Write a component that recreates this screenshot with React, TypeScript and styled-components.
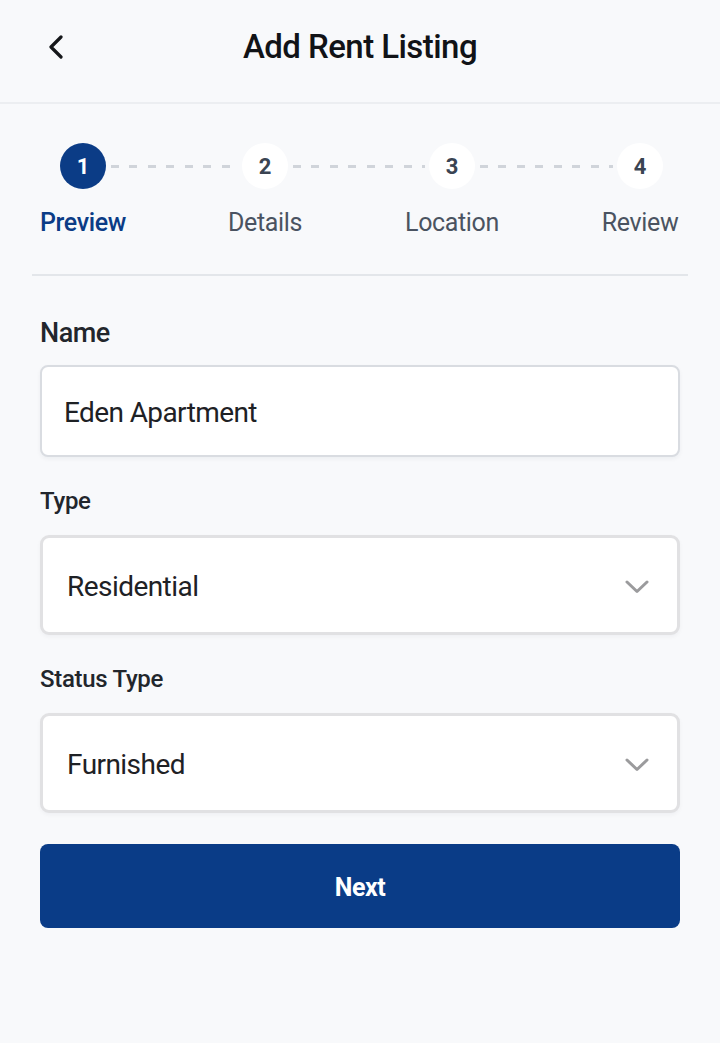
import React from "react";
import styled, { createGlobalStyle } from "styled-components";

const Global = createGlobalStyle`
  html, body { margin: 0; padding: 0; background: #f8f9fb; }
  body { font-family: Roboto, "Liberation Sans", Arial, sans-serif; }
  * { box-sizing: border-box; }
`;

const Page = styled.div`
  width: 720px;
  min-height: 1043px;
  background: #f8f9fb;
  display: flex;
  flex-direction: column;
`;

const Header = styled.header`
  height: 104px;
  border-bottom: 2px solid #eceef1;
  display: grid;
  grid-template-columns: 80px 1fr 80px;
  align-items: center;
  padding-bottom: 9px;
`;

const BackButton = styled.button`
  background: none;
  border: none;
  padding: 0;
  margin-left: 46px;
  width: 20px;
  height: 26px;
  display: flex;
  align-items: center;
  justify-content: center;
  cursor: pointer;
`;

const Title = styled.h1`
  margin: 0;
  text-align: center;
  font-size: 33px;
  font-weight: 500;
  color: #111317;
  letter-spacing: -0.55px;
`;

const Stepper = styled.div`
  display: flex;
  align-items: flex-start;
  padding: 39px 57px 0 60px;
`;

const Step = styled.div`
  width: 46px;
  display: flex;
  flex-direction: column;
  align-items: center;
  gap: 20px;
`;

const Circle = styled.div<{ $active?: boolean }>`
  width: 46px;
  height: 46px;
  border-radius: 50%;
  background: ${(p) => (p.$active ? "#0b3c86" : "#ffffff")};
  color: ${(p) => (p.$active ? "#ffffff" : "#3a4452")};
  font-size: 22px;
  font-weight: 700;
  display: flex;
  align-items: center;
  justify-content: center;
`;

const StepLabel = styled.div<{ $active?: boolean }>`
  white-space: nowrap;
  font-size: 25px;
  line-height: 28px;
  letter-spacing: -0.35px;
  font-weight: ${(p) => (p.$active ? 500 : 400)};
  color: ${(p) => (p.$active ? "#0b3c86" : "#4a5361")};
`;

const Connector = styled.div<{ $grow: number }>`
  flex: ${(p) => p.$grow} 1 0;
  height: 3px;
  margin: 21.5px 4px 0 5px;
  background: repeating-linear-gradient(
    to right,
    #d0d4da 0,
    #d0d4da 8px,
    transparent 8px,
    transparent 18.5px
  );
`;

const Divider = styled.hr`
  border: none;
  height: 2px;
  background: #e3e6ea;
  margin: 37px 32px 0;
`;

const Form = styled.form`
  display: flex;
  flex-direction: column;
  padding: 43px 40px 0;
`;

const Field = styled.div`
  display: flex;
  flex-direction: column;
  margin-bottom: 30px;
`;

const Label = styled.label<{ $strong?: boolean }>`
  font-size: ${(p) => (p.$strong ? "27px" : "24px")};
  line-height: 28px;
  font-weight: 500;
  color: #22262c;
  margin-bottom: ${(p) => (p.$strong ? "18px" : "20px")};
  letter-spacing: ${(p) => (p.$strong ? "-0.5px" : "-0.3px")};
`;

const TextInput = styled.div`
  height: 92px;
  background: #ffffff;
  border: 2px solid #d9dce1;
  border-radius: 8px;
  box-shadow: 0 2px 4px rgba(20, 30, 50, 0.05);
  display: flex;
  align-items: center;
  padding: 2px 22px 0;
  font-size: 28px;
  letter-spacing: -0.6px;
  color: #1e2125;
`;

const Select = styled.div`
  height: 100px;
  background: #ffffff;
  border: 3px solid #e1e1e3;
  border-radius: 9px;
  box-shadow: 0 2px 4px rgba(20, 30, 50, 0.04);
  display: flex;
  align-items: center;
  justify-content: space-between;
  padding: 3px 28px 0 24px;
  font-size: 28px;
  letter-spacing: -0.55px;
  color: #1e2125;
`;

const NextButton = styled.button`
  margin-top: 1px;
  height: 84px;
  width: 100%;
  border: none;
  border-radius: 8px;
  background: #0a3c87;
  color: #ffffff;
  font-family: Roboto, "Liberation Sans", Arial, sans-serif;
  font-size: 25px;
  font-weight: 700;
  letter-spacing: -0.5px;
  padding-top: 4px;
  cursor: pointer;
`;

const Chevron = () => (
  <svg width="24" height="14" viewBox="0 0 24 14" fill="none">
    <path d="M2 2 L12 11.5 L22 2" stroke="#9b9b9d" strokeWidth="3" strokeLinecap="round" strokeLinejoin="round" />
  </svg>
);

const steps = ["Preview", "Details", "Location", "Review"];
const grows = [127, 132, 133];

export default function App() {
  return (
    <Page>
      <Global />
      <Header>
        <BackButton aria-label="Back">
          <svg width="16" height="24" viewBox="0 0 16 24" fill="none">
            <path d="M13 2 L3 12 L13 22" stroke="#15171a" strokeWidth="3.2" strokeLinecap="round" strokeLinejoin="round" />
          </svg>
        </BackButton>
        <Title>Add Rent Listing</Title>
        <div />
      </Header>

      <Stepper>
        {steps.map((s, i) => (
          <React.Fragment key={s}>
            {i > 0 && <Connector $grow={grows[i - 1]} />}
            <Step>
              <Circle $active={i === 0}>{i + 1}</Circle>
              <StepLabel $active={i === 0}>{s}</StepLabel>
            </Step>
          </React.Fragment>
        ))}
      </Stepper>

      <Divider />

      <Form onSubmit={(e) => e.preventDefault()}>
        <Field>
          <Label $strong>Name</Label>
          <TextInput>Eden Apartment</TextInput>
        </Field>
        <Field>
          <Label>Type</Label>
          <Select>
            <span>Residential</span>
            <Chevron />
          </Select>
        </Field>
        <Field>
          <Label>Status Type</Label>
          <Select>
            <span>Furnished</span>
            <Chevron />
          </Select>
        </Field>
        <NextButton type="submit">Next</NextButton>
      </Form>
    </Page>
  );
}
